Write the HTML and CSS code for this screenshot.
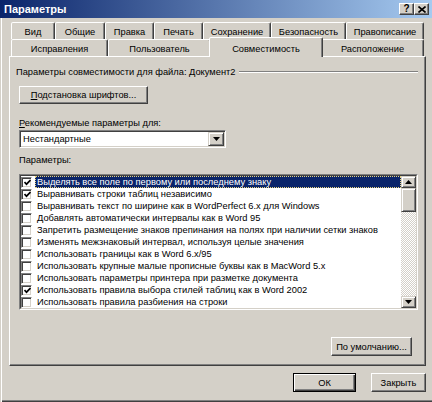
FILE: index.html
```html
<!DOCTYPE html>
<html lang="ru">
<head>
<meta charset="utf-8">
<title>Параметры</title>
<link rel="stylesheet" href="styles.css">
</head>
<body>
<div class="window">
  <div class="titlebar">
    <span class="title">Параметры</span>
    <div class="tbtns">
      <span class="tbtn help">?</span>
      <span class="tbtn close"><svg width="8" height="7" viewBox="0 0 8 7"><path d="M0.5 0.5 L7.5 6.5 M7.5 0.5 L0.5 6.5" stroke="#000" stroke-width="1.6" fill="none"/></svg></span>
    </div>
  </div>
  <div class="client">
    <div class="tabs">
      <div class="tabrow">
        <div class="tab t-view">Вид</div>
        <div class="tab t-general">Общие</div>
        <div class="tab t-edit">Правка</div>
        <div class="tab t-print">Печать</div>
        <div class="tab t-save">Сохранение</div>
        <div class="tab t-security">Безопасность</div>
        <div class="tab t-spelling">Правописание</div>
      </div>
      <div class="tabrow">
        <div class="tab t-track">Исправления</div>
        <div class="tab t-user">Пользователь</div>
        <div class="tab t-compat selected">Совместимость</div>
        <div class="tab t-location">Расположение</div>
      </div>
    </div>
    <div class="panel">
      <div class="grp">
        <span class="grp-text">Параметры совместимости для файла: Документ2</span>
        <span class="etch"></span>
      </div>
      <div class="btn subst"><span><u>П</u>одстановка шрифтов...</span></div>
      <div class="label l-rec"><u>Р</u>екомендуемые параметры для:</div>
      <div class="select">
        <span class="select-text">Нестандартные</span>
        <span class="drop"><svg width="7" height="4" viewBox="0 0 7 4"><path d="M0 0 H7 L3.5 4 Z" fill="#000"/></svg></span>
      </div>
      <div class="label l-opts">Параметры:</div>
      <div class="listbox">
        <div class="items">
          <div class="row"><span class="cb checked"><svg width="7" height="7" viewBox="0 0 7 7"><path d="M0.5 3 L2.5 5.2 L6.5 1" stroke="#000" stroke-width="1.7" fill="none"/></svg></span><span class="txt sel">Выделять все поле по первому или последнему знаку</span></div>
          <div class="row"><span class="cb checked"><svg width="7" height="7" viewBox="0 0 7 7"><path d="M0.5 3 L2.5 5.2 L6.5 1" stroke="#000" stroke-width="1.7" fill="none"/></svg></span><span class="txt">Выравнивать строки таблиц независимо</span></div>
          <div class="row"><span class="cb"></span><span class="txt">Выравнивать текст по ширине как в WordPerfect 6.x для Windows</span></div>
          <div class="row"><span class="cb"></span><span class="txt">Добавлять автоматически интервалы как в Word 95</span></div>
          <div class="row"><span class="cb"></span><span class="txt">Запретить размещение знаков препинания на полях при наличии сетки знаков</span></div>
          <div class="row"><span class="cb"></span><span class="txt">Изменять межзнаковый интервал, используя целые значения</span></div>
          <div class="row"><span class="cb"></span><span class="txt">Использовать границы как в Word 6.x/95</span></div>
          <div class="row"><span class="cb"></span><span class="txt">Использовать крупные малые прописные буквы как в MacWord 5.x</span></div>
          <div class="row"><span class="cb"></span><span class="txt">Использовать параметры принтера при разметке документа</span></div>
          <div class="row"><span class="cb checked"><svg width="7" height="7" viewBox="0 0 7 7"><path d="M0.5 3 L2.5 5.2 L6.5 1" stroke="#000" stroke-width="1.7" fill="none"/></svg></span><span class="txt">Использовать правила выбора стилей таблиц как в Word 2002</span></div>
          <div class="row"><span class="cb"></span><span class="txt">Использовать правила разбиения на строки</span></div>
        </div>
        <div class="scrollbar">
          <span class="sbtn"><svg width="7" height="4" viewBox="0 0 7 4"><path d="M0 4 H7 L3.5 0 Z" fill="#000"/></svg></span>
          <span class="thumb"></span>
          <span class="track"></span>
          <span class="sbtn"><svg width="7" height="4" viewBox="0 0 7 4"><path d="M0 0 H7 L3.5 4 Z" fill="#000"/></svg></span>
        </div>
      </div>
      <div class="defaults-row">
        <div class="btn defaults">По умолчанию...</div>
      </div>
    </div>
    <div class="footer">
      <div class="btn ok">ОК</div>
      <div class="btn closebtn">Закрыть</div>
    </div>
  </div>
</div>
</body>
</html>
```
FILE: styles.css
```css
html, body {
  margin: 0;
  padding: 0;
}
body {
  width: 432px;
  height: 402px;
  overflow: hidden;
}
.window {
  width: 432px;
  height: 402px;
  box-sizing: border-box;
  background: #D4D0C8;
  display: flex;
  flex-direction: column;
  box-shadow: inset 1px 0 #D4D0C8, inset 2px 0 #fff, inset 0 -1px #404040, inset 0 -2px #808080;
  font-family: "Liberation Sans", Arial, sans-serif;
  font-size: 9.3px;
  color: #000;
}
.titlebar {
  height: 18px;
  flex: none;
  background: linear-gradient(to right, #0A246A, #A6CAF0);
  display: flex;
  align-items: center;
  justify-content: space-between;
  padding: 0 3px 0 4px;
}
.title {
  color: #fff;
  font-weight: bold;
  font-size: 11px;
}
.tbtns {
  display: flex;
}
.tbtn {
  box-sizing: border-box;
  width: 15px;
  height: 12px;
  background: #D4D0C8;
  border: 1px solid;
  border-color: #fff #404040 #404040 #fff;
  box-shadow: inset -1px -1px #808080;
  display: flex;
  align-items: center;
  justify-content: center;
  font-weight: bold;
  font-size: 10px;
  line-height: 10px;
}
.client {
  flex: 1;
  display: flex;
  flex-direction: column;
  padding: 4px 6px 0 9px;
}
.tabs {
  display: flex;
  flex-direction: column;
}
.tabrow {
  display: flex;
  align-items: flex-start;
  height: 17px;
  margin-left: 2px;
}
.tab {
  box-sizing: border-box;
  height: 17px;
  border: 1px solid;
  border-bottom: none;
  border-color: #fff #404040 transparent #fff;
  box-shadow: inset -1px 0 #808080;
  border-radius: 2px 2px 0 0;
  background: #D4D0C8;
  text-align: center;
  padding-top: 3px;
  line-height: 12px;
  white-space: nowrap;
}
.t-view { width: 44px; }
.t-general { width: 50px; }
.t-edit { width: 49px; }
.t-print { width: 49px; }
.t-save { width: 68px; }
.t-security { width: 75px; }
.t-spelling { width: 78px; }
.t-track { width: 97px; }
.t-user { width: 103px; }
.t-compat { width: 110px; }
.t-location { width: 103px; }
.tab.selected {
  position: relative;
  z-index: 1;
  width: 114px;
  height: 20px;
  margin: -2px -2px -1px -2px;
  padding-top: 5px;
}
.panel {
  box-sizing: border-box;
  height: 310px;
  flex: none;
  border: 1px solid;
  border-color: #fff #404040 #404040 #fff;
  box-shadow: inset -1px -1px #808080;
  padding: 0 7px 0 9px;
  display: flex;
  flex-direction: column;
  align-items: flex-start;
}
.grp {
  align-self: stretch;
  display: flex;
  align-items: center;
  height: 12px;
  margin-top: 9px;
  margin-left: -3px;
}
.grp-text {
  white-space: nowrap;
}
.etch {
  flex: 1;
  margin-left: 4px;
  height: 0;
  border-top: 1px solid #808080;
  border-bottom: 1px solid #fff;
}
.btn {
  box-sizing: border-box;
  background: #D4D0C8;
  border: 1px solid;
  border-color: #fff #404040 #404040 #fff;
  box-shadow: inset -1px -1px #808080;
  display: flex;
  align-items: center;
  justify-content: center;
  white-space: nowrap;
}
.subst {
  width: 129px;
  height: 18px;
  margin-top: 8px;
}
.label {
  height: 12px;
  line-height: 12px;
  white-space: nowrap;
}
.l-rec {
  margin-top: 13px;
}
.select {
  box-sizing: border-box;
  width: 207px;
  height: 18px;
  margin-top: 1px;
  background: #fff;
  border: 1px solid;
  border-color: #808080 #fff #fff #808080;
  box-shadow: inset 1px 1px #404040, inset -1px -1px #D4D0C8;
  display: flex;
  align-items: center;
  padding: 1px 1px 1px 3px;
}
.select-text {
  flex: 1;
}
.drop {
  box-sizing: border-box;
  width: 16px;
  height: 14px;
  background: #D4D0C8;
  border: 1px solid;
  border-color: #D4D0C8 #404040 #404040 #D4D0C8;
  box-shadow: inset 1px 1px #fff, inset -1px -1px #808080;
  display: flex;
  align-items: center;
  justify-content: center;
}
.l-opts {
  margin-top: 6px;
}
.listbox {
  box-sizing: border-box;
  align-self: stretch;
  height: 136px;
  margin-top: 8px;
  background: #fff;
  border: 2px solid;
  border-color: #808080 #fff #fff #808080;
  position: relative;
  display: flex;
}
.listbox::before {
  content: "";
  position: absolute;
  inset: -1px;
  border: 1px solid;
  border-color: #404040 #D4D0C8 #D4D0C8 #404040;
  pointer-events: none;
}
.items {
  flex: 1;
  min-width: 0;
  display: flex;
  flex-direction: column;
}
.row {
  height: 12px;
  display: flex;
  align-items: center;
}
.cb {
  box-sizing: border-box;
  flex: none;
  width: 11px;
  height: 11px;
  background: #fff;
  border: 1px solid;
  border-color: #808080 #fff #fff #808080;
  box-shadow: inset 1px 1px #404040, inset -1px -1px #D4D0C8;
  display: flex;
  align-items: center;
  justify-content: center;
  padding: 1px 0 0 1px;
}
.cb svg {
  display: block;
}
.txt {
  box-sizing: border-box;
  flex: 1;
  height: 12px;
  line-height: 10px;
  margin-left: 3px;
  padding-left: 1px;
  border: 1px solid transparent;
  white-space: nowrap;
  overflow: hidden;
}
.txt.sel {
  background: #0A246A;
  color: #fff;
  border: 1px dotted #E6D27C;
}
.scrollbar {
  flex: none;
  width: 15px;
  display: flex;
  flex-direction: column;
}
.sbtn, .thumb {
  box-sizing: border-box;
  background: #D4D0C8;
  border: 1px solid;
  border-color: #D4D0C8 #404040 #404040 #D4D0C8;
  box-shadow: inset 1px 1px #fff, inset -1px -1px #808080;
}
.sbtn {
  height: 12px;
  display: flex;
  align-items: center;
  justify-content: center;
}
.thumb {
  height: 24px;
}
.track {
  flex: 1;
  background-color: #D4D0C8;
  background-image: repeating-conic-gradient(#fff 0 25%, #D4D0C8 0 50%);
  background-size: 2px 2px;
}
.defaults-row {
  align-self: stretch;
  display: flex;
  justify-content: flex-end;
  margin-top: 27px;
  padding-right: 6px;
}
.defaults {
  width: 81px;
  height: 19px;
}
.footer {
  display: flex;
  justify-content: flex-end;
  gap: 15px;
  margin-top: 7px;
}
.ok {
  width: 63px;
  height: 19px;
  border: 1px solid #000;
  box-shadow: inset 1px 1px #fff, inset -1px -1px #404040, inset -2px -2px #808080;
}
.closebtn {
  width: 55px;
  height: 19px;
}
```
